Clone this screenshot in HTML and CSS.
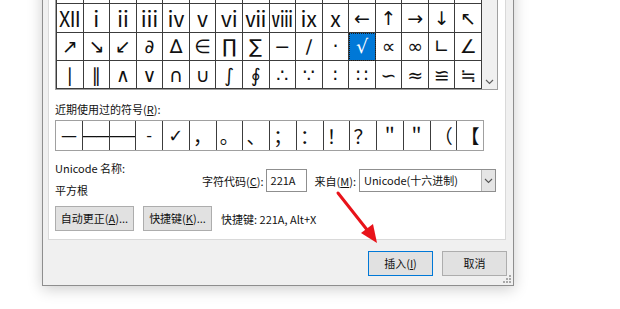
FILE: index.html
```html
<!DOCTYPE html>
<html lang="zh-CN">
<head>
<meta charset="utf-8">
<title>符号</title>
<link rel="stylesheet" href="styles.css">
</head>
<body>
<div class="dialog">
  <div class="panel">
    <div class="grid-box">
      <div class="grid">
        <div class="cell"></div><div class="cell"></div><div class="cell"></div><div class="cell"></div>
        <div class="cell"></div><div class="cell"></div><div class="cell"></div><div class="cell"></div>
        <div class="cell"></div><div class="cell"></div><div class="cell"></div><div class="cell"></div>
        <div class="cell"></div><div class="cell"></div><div class="cell"></div><div class="cell"></div>

        <div class="cell rom">Ⅻ</div><div class="cell rom">ⅰ</div><div class="cell rom">ⅱ</div><div class="cell rom">ⅲ</div>
        <div class="cell rom">ⅳ</div><div class="cell rom">ⅴ</div><div class="cell rom">ⅵ</div><div class="cell rom">ⅶ</div>
        <div class="cell rom">ⅷ</div><div class="cell rom">ⅸ</div><div class="cell rom">ⅹ</div><div class="cell">←</div>
        <div class="cell">↑</div><div class="cell">→</div><div class="cell">↓</div><div class="cell">↖</div>

        <div class="cell">↗</div><div class="cell">↘</div><div class="cell">↙</div><div class="cell">∂</div>
        <div class="cell">∆</div><div class="cell">∈</div><div class="cell">∏</div><div class="cell">∑</div>
        <div class="cell">−</div><div class="cell">∕</div><div class="cell">·</div><div class="cell selected">√</div>
        <div class="cell">∝</div><div class="cell">∞</div><div class="cell">∟</div><div class="cell">∠</div>

        <div class="cell">∣</div><div class="cell">∥</div><div class="cell">∧</div><div class="cell">∨</div>
        <div class="cell">∩</div><div class="cell">∪</div><div class="cell">∫</div><div class="cell">∮</div>
        <div class="cell">∴</div><div class="cell">∵</div><div class="cell">∶</div><div class="cell">∷</div>
        <div class="cell">∽</div><div class="cell">≈</div><div class="cell">≌</div><div class="cell">≒</div>
      </div>
      <div class="scrollbar">
        <div class="thumb"></div>
        <svg class="sb-arrow" width="9" height="6" viewBox="0 0 9 6"><path d="M1 1 L4.5 4.5 L8 1" fill="none" stroke="#606060" stroke-width="1.2"/></svg>
      </div>
    </div>

    <div class="label">近期使用过的符号(<u>R</u>):</div>
    <div class="recent">
      <div class="rcell">—</div>
      <div class="rcell wide">——</div>
      <div class="rcell wide">——</div>
      <div class="rcell">-</div>
      <div class="rcell check">✓</div>
      <div class="rcell cjk">，</div>
      <div class="rcell cjk">。</div>
      <div class="rcell cjk">、</div>
      <div class="rcell cjk">；</div>
      <div class="rcell cjk">：</div>
      <div class="rcell cjk">！</div>
      <div class="rcell cjk">？</div>
      <div class="rcell cjk">＂</div>
      <div class="rcell cjk">＂</div>
      <div class="rcell cjk">（</div>
      <div class="rcell cjk last">【</div>
    </div>

    <div class="info">
      <div class="name-col">
        <div class="text">Unicode 名称:</div>
        <div class="text name">平方根</div>
      </div>
      <div class="code-row">
        <span class="text">字符代码(<u>C</u>):</span>
        <div class="input">221A</div>
        <span class="text from">来自(<u>M</u>):</span>
        <div class="select">
          <span class="sel-text">Unicode(十六进制)</span>
          <div class="dd">
            <svg width="9" height="6" viewBox="0 0 9 6"><path d="M1 1 L4.5 4.5 L8 1" fill="none" stroke="#555" stroke-width="1.1"/></svg>
          </div>
        </div>
      </div>
    </div>

    <div class="btn-row">
      <button class="btn auto">自动更正(<u>A</u>)...</button>
      <button class="btn key">快捷键(<u>K</u>)...</button>
      <span class="text shortcut">快捷键: 221A, Alt+X</span>
    </div>
  </div>

  <div class="footer">
    <button class="btn action primary">插入(<u>I</u>)</button>
    <button class="btn action">取消</button>
  </div>
  <svg class="grip" width="10" height="10" viewBox="0 0 10 10">
    <g fill="#a8a8a8">
      <rect x="7" y="1" width="2" height="2"/>
      <rect x="4" y="4" width="2" height="2"/><rect x="7" y="4" width="2" height="2"/>
      <rect x="1" y="7" width="2" height="2"/><rect x="4" y="7" width="2" height="2"/><rect x="7" y="7" width="2" height="2"/>
    </g>
  </svg>
</div>

<svg class="arrow" width="620" height="309" viewBox="0 0 620 309">
  <line x1="338" y1="193" x2="368" y2="231" stroke="#e8131a" stroke-width="3" stroke-linecap="round"/>
  <polygon points="377,243 361,233 373,224" fill="#e8131a"/>
</svg>
</body>
</html>
```

FILE: styles.css
```css
html, body {
  margin: 0;
  padding: 0;
}
body {
  width: 620px;
  height: 309px;
  overflow: hidden;
  background: #ffffff;
  font-family: "Noto Sans CJK SC", "Noto Sans", sans-serif;
  font-size: 11px;
  color: #111;
  position: relative;
}
u { text-decoration: underline; text-underline-offset: 1px; }

.dialog {
  position: relative;
  margin-top: -36px;
  margin-left: 42px;
  width: 472px;
  box-sizing: border-box;
  border: 1px solid #8e8e8e;
  background: #f0f0f0;
  box-shadow: 0 3px 14px rgba(0,0,0,0.20);
}

.panel {
  margin-left: 5px;
  width: 458px;
  box-sizing: border-box;
  background: #ffffff;
  border: 1px solid #d9d9d9;
  padding: 8px 6px 8px 6px;
}

.grid-box {
  display: flex;
  width: 443px;
  box-sizing: border-box;
  border: 1px solid #a0a0a0;
}
.grid {
  width: 426px;
  box-sizing: border-box;
  display: grid;
  grid-template-columns: repeat(16, 1fr);
  grid-auto-rows: 28.33px;
  border-left: 1px solid #3c3c3c;
  border-top: 1px solid #3c3c3c;
}
.cell {
  box-sizing: border-box;
  border-right: 1px solid #3c3c3c;
  border-bottom: 1px solid #3c3c3c;
  display: flex;
  align-items: center;
  justify-content: center;
  font-family: "DejaVu Sans", sans-serif;
  font-size: 19px;
  color: #111;
  overflow: hidden;
}
.cell.rom {
  font-family: "Noto Sans CJK SC", "DejaVu Sans", sans-serif;
  font-size: 21px;
}
.cell.selected {
  background: #0078d7;
  color: #ffffff;
  outline: 1px dotted #1a1a1a;
  outline-offset: -1px;
}
.scrollbar {
  flex: 1;
  background: #f0f0f0;
  position: relative;
}
.thumb {
  height: 11px;
  margin: 0 1px;
  background: #cdcdcd;
}
.sb-arrow {
  position: absolute;
  left: 3px;
  bottom: 4px;
}

.label {
  margin-top: 11px;
  line-height: 16px;
  height: 16px;
  white-space: nowrap;
}

.recent {
  margin-top: 3px;
  display: flex;
  width: 429px;
  height: 31px;
  box-sizing: border-box;
  border: 1px solid #a0a0a0;
}
.rcell {
  flex: 1;
  box-sizing: border-box;
  border-right: 1px solid #3c3c3c;
  display: flex;
  align-items: center;
  justify-content: center;
  font-family: "DejaVu Sans", sans-serif;
  font-size: 16px;
  overflow: hidden;
  white-space: nowrap;
  color: #111;
}
.rcell.last { border-right: none; }
.rcell.wide { letter-spacing: -2px; font-size: 16px; }
.rcell.check { font-size: 18px; }
.rcell.cjk {
  font-family: "Noto Sans CJK SC", sans-serif;
  font-size: 19px;
}

.info {
  display: flex;
  margin-top: 9px;
}
.text { line-height: 16px; white-space: nowrap; }
.name-col {
  width: 147px;
  flex-shrink: 0;
  display: flex;
  flex-direction: column;
  gap: 6px;
}
.code-row {
  display: flex;
  align-items: center;
  margin-top: 9px;
  height: 23px;
  flex-shrink: 0;
}
.input {
  margin-left: 2px;
  width: 41px;
  height: 23px;
  flex-shrink: 0;
  box-sizing: border-box;
  border: 1px solid #8f8f8f;
  background: #fff;
  padding-left: 4px;
  line-height: 21px;
}
.from { margin-left: 8px; }
.select {
  margin-left: 3px;
  width: 137px;
  height: 23px;
  flex-shrink: 0;
  box-sizing: border-box;
  border: 1px solid #8f8f8f;
  background: #fff;
  display: flex;
  align-items: center;
  justify-content: space-between;
}
.sel-text { padding-left: 4px; line-height: 21px; white-space: nowrap; }
.dd {
  width: 14px;
  height: 21px;
  box-sizing: border-box;
  background: #e5e5e5;
  border-left: 1px solid #b5b5b5;
  display: flex;
  align-items: center;
  justify-content: center;
}

.btn-row {
  display: flex;
  align-items: center;
  margin-top: 8px;
}
.btn {
  font-family: "Noto Sans CJK SC", sans-serif;
  font-size: 11px;
  color: #111;
  height: 25px;
  box-sizing: border-box;
  background: #e1e1e1;
  border: 1px solid #adadad;
  padding: 0;
  line-height: 23px;
  white-space: nowrap;
}
.btn.auto { width: 79px; }
.btn.key { width: 69px; margin-left: 9px; }
.shortcut { margin-left: 9px; }

.footer {
  display: flex;
  justify-content: flex-end;
  gap: 9px;
  padding: 11px 6px 9px 0;
}
.btn.action { width: 65px; }
.btn.primary {
  border-color: #0078d7;
}

.grip {
  position: absolute;
  right: 1px;
  bottom: 1px;
}

.arrow {
  position: absolute;
  left: 0;
  top: 0;
  pointer-events: none;
}
```
